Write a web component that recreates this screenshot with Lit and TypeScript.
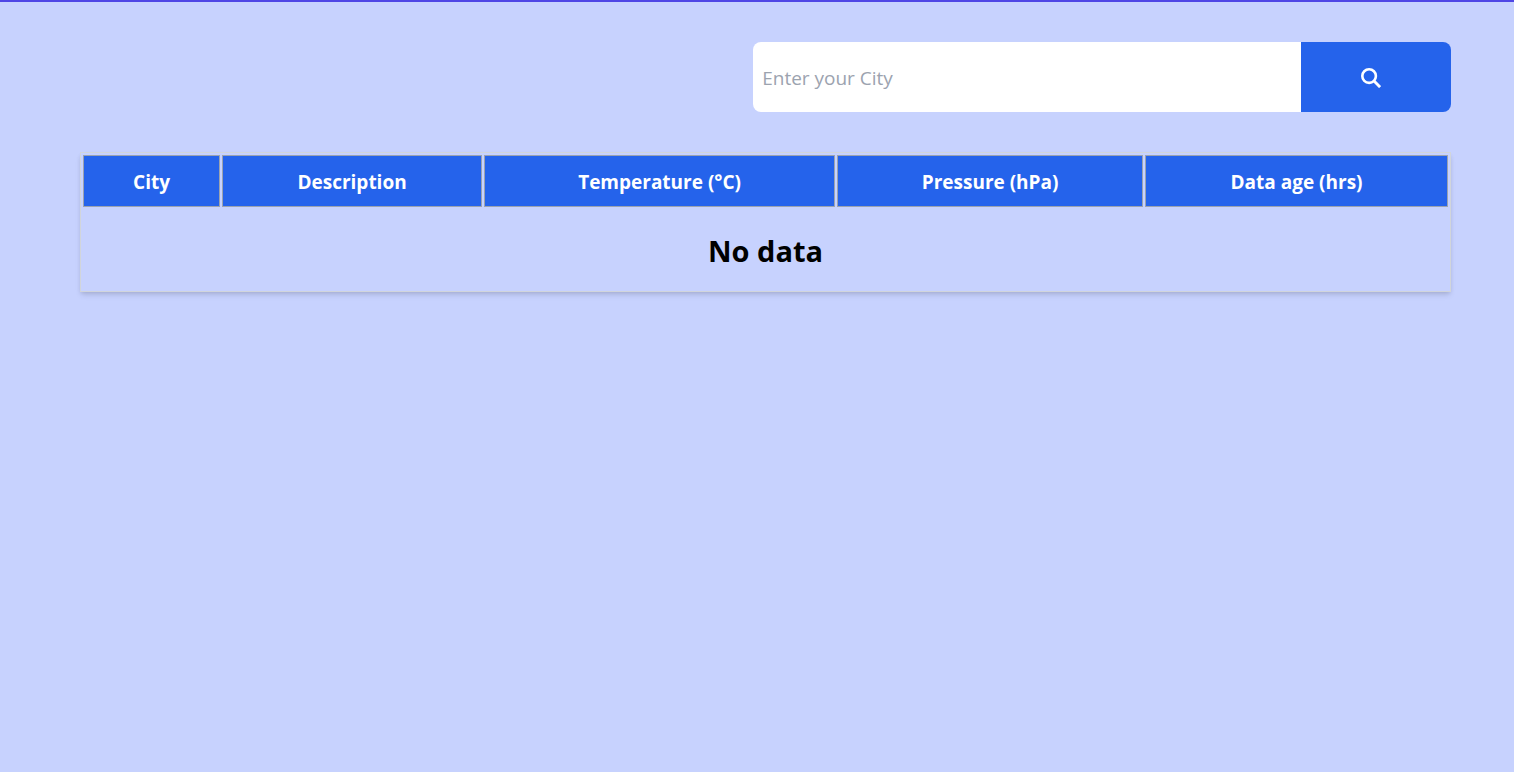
import { LitElement, html, css } from "lit";
import { customElement, state } from "lit/decorators.js";

const COLUMNS = [
  { name: "City", cls: "col-city" },
  { name: "Description", cls: "col-description" },
  { name: "Temperature (°C)", cls: "col-temperature" },
  { name: "Pressure (hPa)", cls: "col-pressure" },
  { name: "Data age (hrs)", cls: "col-age" },
];

@customElement("app-root")
export class AppRoot extends LitElement {
  static styles = css`
    :host {
      display: block;
      box-sizing: border-box;
      min-height: 100vh;
      padding: 40px 63px 40px 80px;
      border-top: 2px solid #4f46e5;
      background: #c7d2fe;
      color: #000;
      font-family: "Segoe UI", "Open Sans", "Noto Sans", sans-serif;
      font-size: 19px;
      line-height: 28px;
    }
    .search {
      display: flex;
      width: 50.9%;
      height: 70px;
      margin: 0 0 40px auto;
      border-radius: 8px;
      overflow: hidden;
    }
    .field {
      flex: 1;
      min-width: 0;
      box-sizing: border-box;
      margin: 0;
      padding: 2px 9px 0;
      border: 0;
      outline: 0;
      background: #fff;
      color: #000;
      font: inherit;
    }
    .field::placeholder {
      color: #9ca3af;
      opacity: 1;
    }
    .submit {
      display: flex;
      flex: 0 0 150px;
      align-items: center;
      justify-content: center;
      padding: 2px 10px 0 0;
      border: 0;
      background: #2563eb;
      color: #fff;
      cursor: pointer;
    }
    .icon {
      width: 20px;
      height: 20px;
    }
    .table {
      width: 100%;
      table-layout: fixed;
      border: 1px solid #d1d5db;
      border-collapse: separate;
      border-spacing: 2px;
      box-shadow: 0 4px 6px -1px rgb(0 0 0 / 0.1), 0 2px 4px -1px rgb(0 0 0 / 0.1);
    }
    .col-city { width: 10.1%; }
    .col-description { width: 19.16%; }
    .col-temperature { width: 25.87%; }
    .col-pressure { width: 22.55%; }
    .head {
      box-sizing: border-box;
      height: 52px;
      padding: 12px 0 10px;
      border: 1px solid #9ca3af;
      background: #2563eb;
      color: #fff;
      font-weight: 700;
      text-align: center;
    }
    .empty {
      padding: 22px 0 18px;
      font-size: 29px;
      font-weight: 700;
      line-height: 40px;
      text-align: center;
    }
  `;

  @state() private city = "";

  private onInput(e: Event) {
    this.city = (e.target as HTMLInputElement).value;
  }

  render() {
    return html`
      <form class="search" @submit=${(e: Event) => e.preventDefault()}>
        <input
          class="field"
          type="text"
          aria-label="City"
          placeholder="Enter your City"
          .value=${this.city}
          @input=${this.onInput}
        />
        <button class="submit" type="submit" aria-label="Search">
          <svg class="icon" viewBox="0 0 20 20" fill="none" stroke="currentColor" aria-hidden="true">
            <circle cx="8.1" cy="8.1" r="6.8" stroke-width="2.6" />
            <path d="M12.8 12.8L19.1 19.1" stroke-width="2.9" />
          </svg>
        </button>
      </form>
      <table class="table">
        <colgroup>
          ${COLUMNS.map((c) => html`<col class=${c.cls} />`)}
        </colgroup>
        <thead>
          <tr>
            ${COLUMNS.map((c) => html`<th class="head" scope="col">${c.name}</th>`)}
          </tr>
        </thead>
        <tbody>
          <tr>
            <td class="empty" colspan="5">No data</td>
          </tr>
        </tbody>
      </table>
    `;
  }
}
